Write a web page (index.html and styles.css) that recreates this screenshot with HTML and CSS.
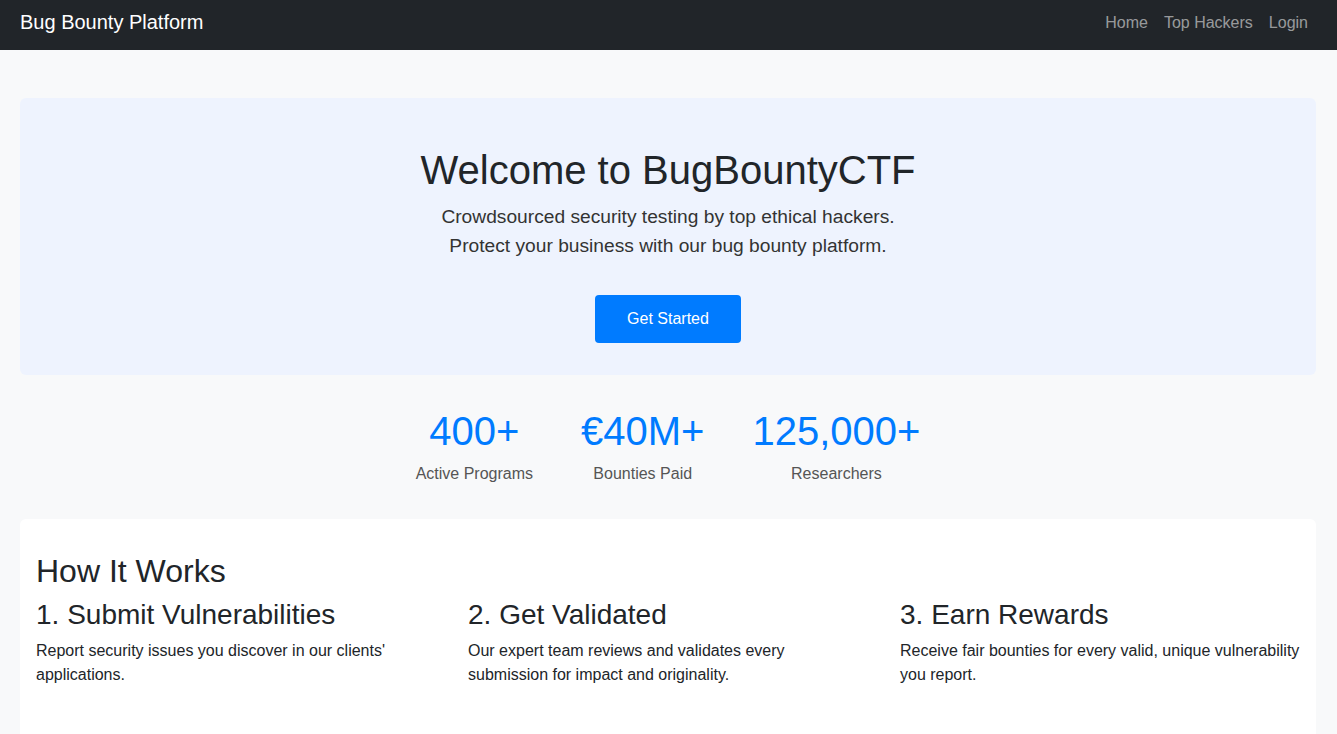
FILE: index.html
```html
<!DOCTYPE html>
<html lang="en">
<head>
<meta charset="utf-8">
<title>Bug Bounty Platform</title>
<link rel="stylesheet" href="styles.css">
</head>
<body>
<nav class="navbar">
  <a class="brand" href="#">Bug Bounty Platform</a>
  <ul class="nav-links">
    <li><a href="#">Home</a></li>
    <li><a href="#">Top Hackers</a></li>
    <li><a href="#">Login</a></li>
  </ul>
</nav>
<main class="container">
  <section class="hero">
    <h1>Welcome to BugBountyCTF</h1>
    <p class="lead">Crowdsourced security testing by top ethical hackers.<br>Protect your business with our bug bounty platform.</p>
    <a class="btn-primary" href="#">Get Started</a>
  </section>
  <section class="stats">
    <div class="stat"><div class="stat-num">400+</div><div class="stat-label">Active Programs</div></div>
    <div class="stat"><div class="stat-num">€40M+</div><div class="stat-label">Bounties Paid</div></div>
    <div class="stat"><div class="stat-num">125,000+</div><div class="stat-label">Researchers</div></div>
  </section>
  <section class="card">
    <h2>How It Works</h2>
    <div class="steps">
      <div class="step">
        <h3>1. Submit Vulnerabilities</h3>
        <p>Report security issues you discover in our clients' applications.</p>
      </div>
      <div class="step">
        <h3>2. Get Validated</h3>
        <p>Our expert team reviews and validates every submission for impact and originality.</p>
      </div>
      <div class="step">
        <h3>3. Earn Rewards</h3>
        <p>Receive fair bounties for every valid, unique vulnerability you report.</p>
      </div>
    </div>
  </section>
</main>
</body>
</html>
```

FILE: styles.css
```css
* { box-sizing: border-box; }
html, body { margin: 0; padding: 0; }
body {
  font-family: "Liberation Sans", Arial, sans-serif;
  font-size: 16px;
  line-height: 1.5;
  color: #212529;
  background: #f8f9fa;
}
a { text-decoration: none; }

.navbar {
  height: 50px;
  background: #212529;
  display: flex;
  justify-content: space-between;
  align-items: flex-start;
  padding: 7px 22px 0 20px;
}
.brand {
  color: #fff;
  font-size: 20px;
  line-height: 30px;
}
.nav-links {
  list-style: none;
  margin: 1px 0 0;
  padding: 0;
  display: flex;
}
.nav-links a {
  display: block;
  padding: 0 8px;
  font-size: 16px;
  line-height: 30px;
  color: rgba(255, 255, 255, 0.55);
}
.nav-links li:last-child a { padding-right: 7px; }

.container {
  padding: 48px 21px 0 20px;
}

.hero {
  background: #eef3fe;
  border-radius: 6px;
  padding: 48px 16px 32px;
  text-align: center;
}
.hero h1 {
  margin: 0 0 8px;
  font-size: 40px;
  font-weight: 400;
  line-height: 48px;
}
.lead {
  margin: 0 0 35px;
  font-size: 19.2px;
  line-height: 29px;
  color: #333;
}
.btn-primary {
  display: inline-block;
  background: #007bff;
  color: #fff;
  font-size: 16px;
  line-height: 24px;
  padding: 12px 32px;
  border-radius: 4px;
}

.stats {
  display: flex;
  justify-content: center;
  gap: 48px;
  margin: 32px 0 33px;
  text-align: center;
}
.stat-num {
  font-size: 40px;
  line-height: 48px;
  color: #007bff;
  margin-bottom: 7px;
}
.stat-label {
  color: #555;
  font-size: 16px;
  line-height: 24px;
}

.card {
  background: #fff;
  border-radius: 6px;
  padding: 33px 16px 48px;
  min-height: 240px;
}
.card h2 {
  margin: 0 0 8px;
  font-size: 32px;
  font-weight: 400;
  line-height: 38px;
}
.steps {
  display: grid;
  grid-template-columns: repeat(3, 1fr);
  gap: 32px;
}
.step h3 {
  margin: 0 0 7px;
  font-size: 28px;
  font-weight: 400;
  line-height: 34px;
}
.step p {
  margin: 0;
  font-size: 16px;
  line-height: 24px;
}
```
